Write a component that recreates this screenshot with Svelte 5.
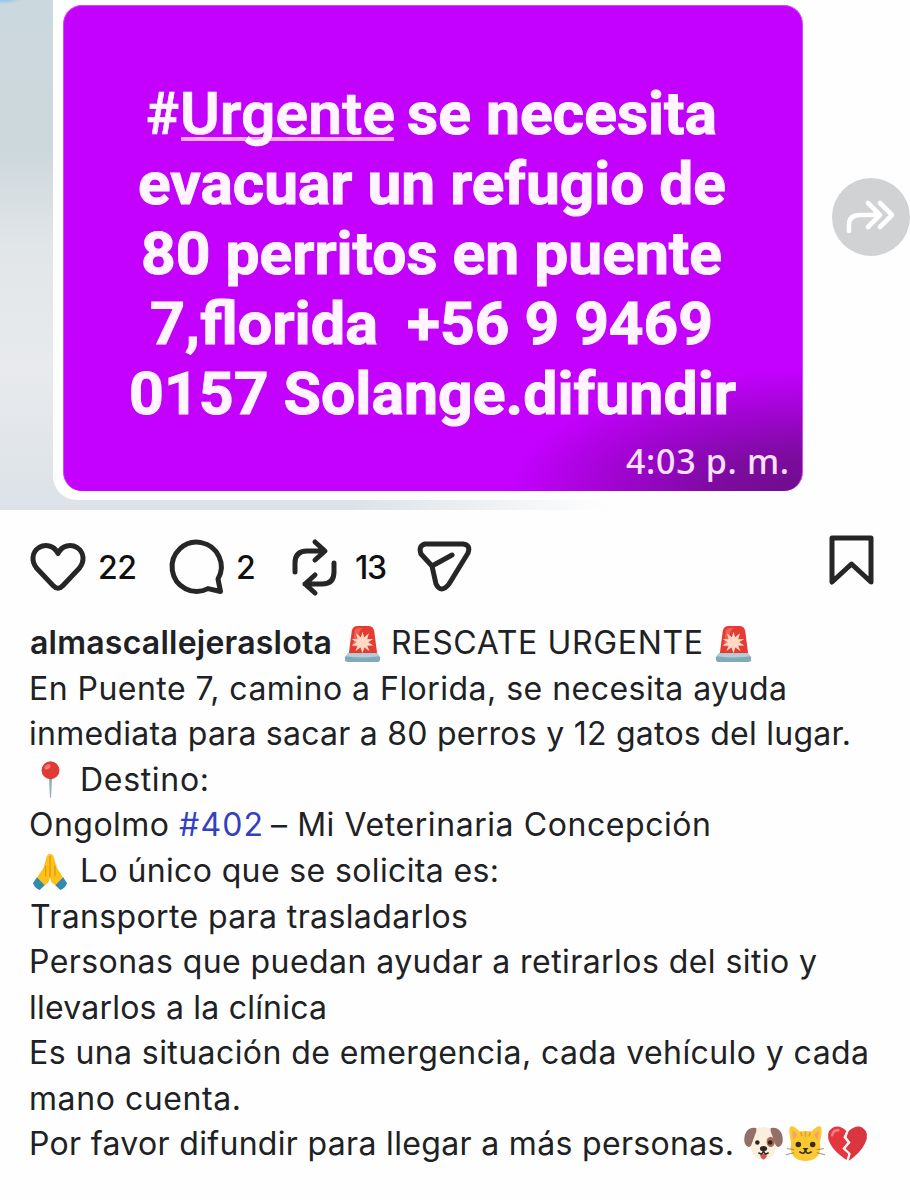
<script>
  const story = [
    [{ t: '#', x: 147, w: 33, m: true }, { t: 'Urgente', x: 181, w: 213, u: true, m: true }, { t: 'se necesita', x: 408, w: 308 }],
    [{ t: 'evacuar un refugio de', x: 139, w: 586 }],
    [{ t: '80 perritos en puente', x: 142, w: 579 }],
    [{ t: '7,florida', x: 151, w: 226 }, { t: '+56 9 9469', x: 408, w: 304 }],
    [{ t: '0157 Solange.difundir', x: 130, w: 605 }]
  ];

  const caption = [
    [{ t: 'almascallejeraslota', x: 30, w: 302, b: true }, { icon: 'siren', x: 344, w: 37 }, { t: 'RESCATE URGENTE', x: 391, w: 312 }, { icon: 'siren', x: 715, w: 37 }],
    [{ t: 'En Puente 7, camino a Florida, se necesita ayuda', x: 29, w: 758 }],
    [{ t: 'inmediata para sacar a 80 perros y 12 gatos del lugar.', x: 29, w: 822 }],
    [{ icon: 'pin', x: 32, w: 37 }, { t: 'Destino:', x: 80, w: 129 }],
    [{ t: 'Ongolmo', x: 29, w: 140 }, { t: '#402', x: 179, w: 84, link: true }, { t: '– Mi Veterinaria Concepción', x: 271, w: 440 }],
    [{ icon: 'hands', x: 32, w: 37 }, { t: 'Lo único que se solicita es:', x: 80, w: 419 }],
    [{ t: 'Transporte para trasladarlos', x: 30, w: 438 }],
    [{ t: 'Personas que puedan ayudar a retirarlos del sitio y', x: 29, w: 788 }],
    [{ t: 'llevarlos a la clínica', x: 29, w: 298 }],
    [{ t: 'Es una situación de emergencia, cada vehículo y cada', x: 29, w: 840 }],
    [{ t: 'mano cuenta.', x: 29, w: 212 }],
    [{ t: 'Por favor difundir para llegar a más personas.', x: 29, w: 705 }, { icon: 'dog', x: 744, w: 39 }, { icon: 'cat', x: 786, w: 39 }, { icon: 'broken', x: 828, w: 39 }]
  ];

  // Turns the start of every run into the space left after the previous one.
  const gap = (row, i, origin = 0) => row[i].x - (i ? row[i - 1].x + row[i - 1].w : origin);

  // Tracks a run of text so that it fills its box.
  function track(node, width) {
    const range = document.createRange();
    range.selectNodeContents(node);
    const natural = range.getBoundingClientRect().width;
    node.style.letterSpacing = `${(width - natural) / (node.textContent.length - 1)}px`;
  }

  // Condenses a run of text without breaking its ligatures.
  function condense(node, width) {
    const range = document.createRange();
    range.selectNodeContents(node);
    const natural = range.getBoundingClientRect().width;
    node.style.transform = `scaleX(${width / natural})`;
  }
</script>

{#snippet glyph(name)}
  <svg class="emoji" viewBox="0 0 38 38" aria-hidden="true">
    {#if name === 'siren'}
      <path d="M5 29 8 6Q9 1 14 1H25Q30 1 31 6L34 29Z" fill="#e63b32" />
      <path d="M9 22 11 6Q12 3 15 3H20Q14 4 14 22Z" fill="#f57468" opacity=".65" />
      <path d="m19 7 1.7 5.6 4.9-4-1.7 6.1 6-.4-5 3.4 5.3 3.3-6.3.2 2.2 5.5-5.2-3.6L19 29l-2-5.9-5.3 3.6 2.2-5.5-6.3-.2 5.4-3.3-5-3.4 6 .4-1.7-6.1 5 4Z" fill="#ffd9c4" />
      <path d="M4 29H34L37 33V36Q37 38 34 38H4Q1 38 1 36V33Z" fill="#82a9b8" />
      <path d="M4 29H34L36 32Q19 35 2 32Z" fill="#b5cdd6" />
    {:else if name === 'pin'}
      <path d="M17.3 15H20.7L19.6 37Q19 39 18.4 37Z" fill="#8bb3c4" />
      <circle cx="19" cy="9.5" r="9.2" fill="#df3b36" />
      <ellipse cx="16" cy="6" rx="3.3" ry="2.2" fill="#f47870" transform="rotate(-35 16 6)" />
    {:else if name === 'hands'}
      <path d="M18.5 1Q15 1 14.5 6L12 15 4 27 11 35 17 30 18.5 25 20 30 26 35 33 27 25.5 15 22.5 5Q22 1 18.5 1Z" fill="#fcc21b" />
      <path d="M18.5 3V25M14 13V24M23.5 13V24" stroke="#e19b0c" stroke-width="1.4" fill="none" />
      <path d="m5 25 8 8-5 5Q3 36 1 31ZM32 25l-8 8 5 5q5-2 7-7Z" fill="#338aae" />
    {:else if name === 'dog'}
      <path d="M9 5Q19-1 29 5 32 12 31 23 30 33 19 34 8 33 7 23 6 12 9 5Z" fill="#faeedc" />
      <path d="M12 3Q4 1 1 9-1 17 2 20 6 24 8 17L12 6ZM26 3Q34 1 37 9 39 17 36 20 32 24 30 17L26 6Z" fill="#927067" />
      <ellipse cx="26" cy="16.5" rx="4" ry="5" fill="#a76958" />
      <circle cx="13" cy="17" r="2.2" fill="#30241f" /><circle cx="25.5" cy="17" r="2.2" fill="#30241f" />
      <path d="M16 28H22V31Q19 36 16 31Z" fill="#cf5460" />
      <path d="M14 27Q18 30 19 25 20 30 24 27" stroke="#30241f" stroke-width="1.5" fill="none" />
      <ellipse cx="19" cy="23" rx="3.5" ry="2.6" fill="#30241f" />
    {:else if name === 'cat'}
      <path d="M4 2Q6-1 13 6H25Q32-1 34 2 36 5 33 17 36 34 19 35 2 34 5 17 2 5 4 2Z" fill="#fcc832" />
      <path d="m6 5 5 4-4 6ZM32 5l-5 4 4 6Z" fill="#f3a36f" />
      <path d="M19 6V12M14.5 7 15.5 11M23.5 7 22.5 11" stroke="#e8a02b" stroke-width="1.6" />
      <circle cx="12" cy="19" r="2.7" fill="#352b20" /><circle cx="26" cy="19" r="2.7" fill="#352b20" />
      <path d="M13 26Q18 30 19 24 20 30 25 26" stroke="#352b20" stroke-width="1.5" fill="none" />
      <path d="M16 22.5H22L19 25.5Z" fill="#352b20" />
      <path d="M1 23 8 24M0 29 8 27M37 23 30 24M38 29 30 27" stroke="#8c7a57" stroke-width=".8" />
    {:else}
      <path d="M18 6Q11-1 4 3-3 8 2 18 6 26 18 34L20 28 14 23 19 17 15 12Z" fill="#e53640" />
      <path d="M20 6Q28-1 34 3 41 8 36 18 32 27 20 35L22 28 17 23 22 17 18 12Z" fill="#d93640" />
      <path d="M19 5.5 16.5 12 20.5 17 15.5 23 21 28 19 35" fill="none" stroke="#fef4f4" stroke-width="1.8" />
      <path d="M4 10Q5 5 10 5" stroke="#f77c82" stroke-width="2.5" stroke-linecap="round" fill="none" />
    {/if}
  </svg>
{/snippet}

<main>
  <section class="photo">
    <div class="frame">
      <div class="card">
        <div class="message">
          {#each story as row}
            <div class="line">
              {#each row as run, i}
                <span class="slot" class:under={run.u} style:width="{run.w}px" style:margin-left="{gap(row, i, 63)}px"><span class="big" class:medium={run.m} use:condense={run.w + (run.t === '#' ? 0 : 2)}>{run.t}</span></span>
              {/each}
            </div>
          {/each}
        </div>
        <time><span use:track={163}>4:03 p. m.</span></time>
      </div>
    </div>
    <button class="forward" aria-label="Reenviar">
      <svg viewBox="0 0 78 78"><path d="M17 53V47Q17 37 28 37H45M36 25 48 37 36 49M48 25 60 37 48 49" fill="none" stroke="#fff" stroke-width="4.6" stroke-linecap="round" stroke-linejoin="round" /></svg>
    </button>
  </section>

  <section class="actions">
    <svg class="heart" viewBox="0 0 56 50"><path d="M28 10.5C24 2 15 1 9 4.5 2 9 1 18 6.5 25L23 42.5Q28 48 33 42.5L49.5 25C55 18 54 9 47 4.5 41 1 32 2 28 10.5Z" /></svg>
    <span class="count likes"><span use:track={39}>22</span></span>
    <svg class="comment" viewBox="0 0 56 56"><path d="M49 39A24.6 24.6 0 1 0 39 48.6L51.5 51.5Z" /></svg>
    <span class="count comments">2</span>
    <svg class="repost" viewBox="0 0 46 56"><path d="M3 33V24Q3 12 15 12H32M23 3 33 12 23 21M42 24V33Q42 45 30 45H13M23 36 13 45 23 54" /></svg>
    <span class="count reposts"><span use:track={32}>13</span></span>
    <svg class="send" viewBox="0 0 56 52"><path d="M8 3H46Q54 4 51 12L32 43Q24 53 19 43L15 25 4 13Q1 5 8 3ZM15 25 35 14" /></svg>
    <svg class="save" viewBox="0 0 46 51"><path d="M3 3H42V47L22.5 29 3 47Z" /></svg>
  </section>

  <section class="caption">
    {#each caption as row}
      <div class="row">
        {#each row as run, i}
          <span class="slot" style:width="{run.w}px" style:margin-left="{gap(row, i)}px">
            {#if run.icon}
              {@render glyph(run.icon)}
            {:else}
              <span class="copy" class:bold={run.b} class:link={run.link} use:track={run.w}>{run.t}</span>
            {/if}
          </span>
        {/each}
      </div>
    {/each}
  </section>
</main>

<style>
  :global(body) { margin: 0; background: #fefefe; }
  main { width: 910px; height: 1200px; overflow: hidden; background: #fefefe; color: #202124; font-family: Inter, "Noto Sans", sans-serif; }
  .photo {
    position: relative; box-sizing: border-box; height: 510px; padding-left: 53px;
    background:
      linear-gradient(90deg, transparent 350px, #fefefe 610px),
      radial-gradient(ellipse 18px 4px at 4px 0, #8fc4f0 0, transparent 100%),
      linear-gradient(#cbd8de 0, #cdd8dc 150px, #e2e6e9 250px, #e8eaed 370px, #dce2e7 510px);
  }
  .frame { box-sizing: border-box; width: 857px; height: 499.5px; padding: 5px 10px 9px; background: #fefefe; border-radius: 0 0 0 24px; }
  .card {
    box-sizing: border-box; width: 740px; height: 485.5px; padding-top: 78px; border-radius: 19px; overflow: hidden;
    border: 1px solid #cf4cec; border-width: 1px 1px 0 1px;
    background: radial-gradient(ellipse 290px 120px at 100% 100%, #6f0d8c 0, #7d0ba0 30%, #9d05cc 62%, #c400ff 100%), #c400ff;
  }
  .line { display: flex; height: 70px; margin-left: -1px; }
  .slot { display: block; flex: none; white-space: pre; }
  .big { display: inline-block; transform-origin: left; margin-left: -1px; color: #fff4ff; font: 700 59.5px/60px Roboto, sans-serif; -webkit-text-stroke: 1px #fff4ff; text-shadow: 0 0 2px #823c8c; }
  .medium { font-weight: 600; -webkit-text-stroke-width: .7px; }
  .under { box-sizing: border-box; height: 57px; border-bottom: 4px solid #ffaaff; }
  time { display: block; margin: 5px 0 0 562px; white-space: pre; color: #fae0ff; font: 500 34px/44px "Noto Sans", sans-serif; }
  .forward { position: absolute; left: 832px; top: 178px; width: 78px; height: 78px; padding: 0; border: 0; border-radius: 50%; background: #d0d2d3; }
  .forward svg { display: block; width: 78px; height: 78px; }
  .actions { display: flex; align-items: flex-start; height: 108px; }
  .actions svg { flex: none; overflow: visible; fill: none; stroke: #262626; stroke-width: 5; stroke-linecap: round; stroke-linejoin: round; }
  .heart { width: 56px; height: 50px; margin: 33px 0 0 30px; }
  .comment { width: 56px; height: 56px; margin: 30px 0 0 32px; }
  .repost { width: 46px; height: 56px; margin: 29px 0 0 36px; }
  .send { width: 56px; height: 52px; margin: 31px 0 0 30px; }
  .save { width: 46px; height: 51px; margin: 25px 0 0 356px; }
  .count { flex: none; white-space: pre; color: #111; font: 500 32px/40px Inter, sans-serif; margin-top: 38px; }
  .likes { width: 39px; margin-left: 12px; }
  .comments { width: 20px; margin-left: 11px; }
  .reposts { width: 32px; margin-left: 17px; }
  .caption { padding-top: 2.5px; }
  .row { display: flex; align-items: center; height: 45.55px; }
  .copy { display: inline-block; font-size: 32px; line-height: 44px; }
  .bold { font-weight: 600; }
  .link { color: #3441be; }
  .emoji { display: block; width: 100%; aspect-ratio: 1; overflow: visible; }
</style>
